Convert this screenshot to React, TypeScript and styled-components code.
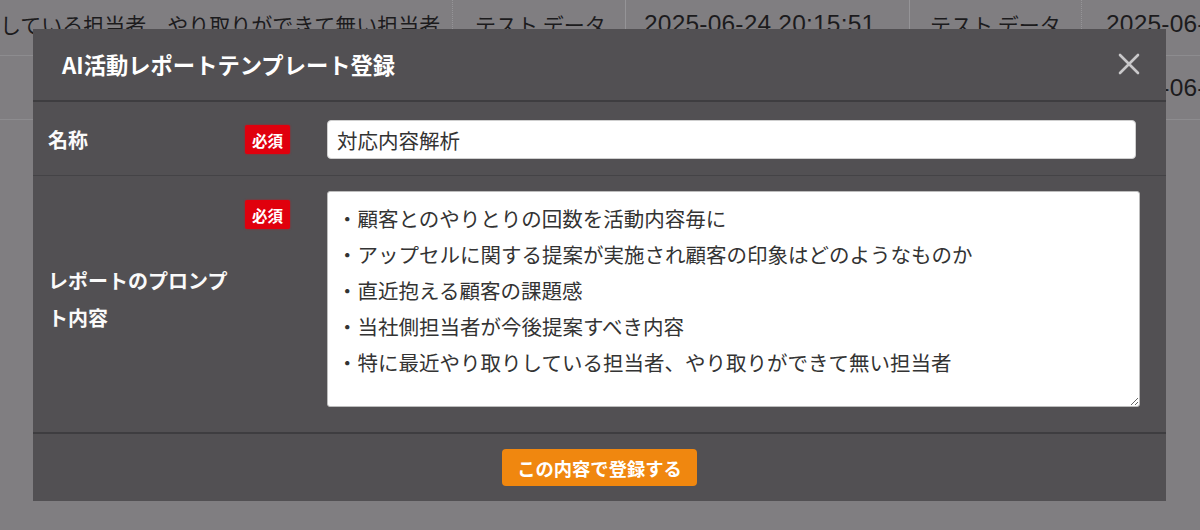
import React from "react";
import styled, { createGlobalStyle } from "styled-components";

const GlobalStyle = createGlobalStyle`
  html, body {
    margin: 0;
    padding: 0;
    background: #807e81;
    overflow: hidden;
  }
  body {
    font-family: "Noto Sans CJK JP", "Noto Sans", sans-serif;
  }
  * {
    box-sizing: border-box;
  }
`;

const Page = styled.div`
  width: 1200px;
  height: 530px;
  overflow: hidden;
`;

const Table = styled.div`
  margin-top: -8px;
  display: flex;
  flex-direction: column;
`;

const TableRow = styled.div`
  display: grid;
  grid-template-columns: 453px 173px 284px 172px 1fr;
  height: 64px;
  border-bottom: 1px solid #8d8c8f;
`;

const Cell = styled.div<{ $pad: number; $line?: "solid" | "dotted" | "none"; $mono?: boolean }>`
  display: flex;
  align-items: center;
  padding-left: ${(p) => p.$pad}px;
  border-right: ${(p) => (p.$line && p.$line !== "none" ? `1px ${p.$line} #959497` : "none")};
  font-family: ${(p) =>
    p.$mono ? `"Liberation Sans", Arial, sans-serif` : `"Noto Sans CJK JP", "Noto Sans", sans-serif`};
  font-size: ${(p) => (p.$mono ? 24.5 : 21)}px;
  letter-spacing: ${(p) => (p.$mono ? 0.2 : 0)}px;
  color: #1c1b1d;
  white-space: nowrap;
  overflow: hidden;
`;

const Backdrop = styled.div`
  position: fixed;
  inset: 0;
  display: flex;
  align-items: center;
  justify-content: center;
`;

const Modal = styled.div`
  width: 1133px;
  margin-right: 1px;
  background: #525053;
  display: flex;
  flex-direction: column;
  color: #fff;
`;

const Header = styled.div`
  height: 73px;
  display: flex;
  align-items: center;
  justify-content: space-between;
  padding: 0 26px 2px 29px;
  border-bottom: 2px solid #3e3d40;
`;

const Title = styled.h2`
  margin: 0;
  font-size: 22.3px;
  font-weight: 700;
  color: #fff;
`;

const CloseButton = styled.button`
  width: 22px;
  height: 22px;
  padding: 0;
  border: none;
  background: transparent;
  cursor: pointer;
  display: flex;
`;

const FormRow = styled.div<{ $tall?: boolean; $last?: boolean }>`
  display: grid;
  grid-template-columns: 197px 45px 1fr;
  align-items: ${(p) => (p.$tall ? "start" : "center")};
  padding: ${(p) => (p.$tall ? "15px 26px 25px 15px" : "18px 30px 16px 15px")};
  border-bottom: ${(p) => (p.$last ? "2px solid #3e3d40" : "1px solid #444346")};
`;

const Label = styled.div`
  align-self: center;
  font-size: 20px;
  font-weight: 700;
  line-height: 37px;
  padding-right: 8px;
  color: #fafafa;
`;

const Required = styled.span<{ $top?: number }>`
  display: flex;
  align-items: center;
  justify-content: center;
  height: 29px;
  margin-top: ${(p) => p.$top ?? 0}px;
  background: #e0000d;
  border-radius: 2px;
  font-size: 15.5px;
  font-weight: 700;
  color: #fff;
  box-shadow: 0 0 2px rgba(230, 0, 20, 0.7);
`;

const Field = styled.div`
  padding-left: 37px;
  display: flex;
`;

const TextInput = styled.input`
  flex: 1;
  height: 39px;
  padding: 0 9px;
  border: 1px solid #cfcfcf;
  border-radius: 4px;
  background: #fff;
  font-family: "Noto Sans CJK JP", "Noto Sans", sans-serif;
  font-size: 20.5px;
  color: #333;
  outline: none;
`;

const TextArea = styled.textarea`
  flex: 1;
  height: 216px;
  padding: 8px 9px;
  border: 1px solid #bdbdbd;
  border-radius: 3px;
  background: #fff;
  font-family: "Noto Sans CJK JP", "Noto Sans", sans-serif;
  font-size: 20.5px;
  line-height: 36px;
  color: #333;
  outline: none;
  resize: vertical;
`;

const Footer = styled.div`
  display: flex;
  justify-content: center;
  padding: 15px 0;
`;

const SubmitButton = styled.button`
  height: 37px;
  padding: 0 15px;
  border: none;
  border-radius: 4px;
  background: #f0870f;
  color: #fff;
  font-family: "Noto Sans CJK JP", "Noto Sans", sans-serif;
  font-size: 18.3px;
  font-weight: 700;
  cursor: pointer;
`;

type BgRow = { pad: number; cells: string[] };

const rows: BgRow[] = [
  {
    pad: 0,
    cells: ["している担当者、やり取りができて無い担当者", "テスト データ", "2025-06-24 20:15:51", "テスト データ", "2025-06-24 20:15:51"],
  },
  {
    pad: 60,
    cells: ["テンプレート", "テスト データ", "2025-06-24 20:10:02", "テスト データ", "2025-06-24 20:10:02"],
  },
];

const promptText = [
  "・顧客とのやりとりの回数を活動内容毎に",
  "・アップセルに関する提案が実施され顧客の印象はどのようなものか",
  "・直近抱える顧客の課題感",
  "・当社側担当者が今後提案すべき内容",
  "・特に最近やり取りしている担当者、やり取りができて無い担当者",
].join("\n");

const CloseIcon = () => (
  <svg width="22" height="22" viewBox="0 0 22 22">
    <path d="M2 2 L20 20 M20 2 L2 20" stroke="#c9c8ca" strokeWidth="2.6" strokeLinecap="round" />
  </svg>
);

export default function App() {
  return (
    <Page>
      <GlobalStyle />
      <Table>
        {rows.map((r) => (
          <TableRow key={r.cells[2]}>
            <Cell $pad={r.pad} $line="dotted">{r.cells[0]}</Cell>
            <Cell $pad={22} $line="solid">{r.cells[1]}</Cell>
            <Cell $pad={18} $line="solid" $mono>{r.cells[2]}</Cell>
            <Cell $pad={20} $line="dotted">{r.cells[3]}</Cell>
            <Cell $pad={24} $mono>{r.cells[4]}</Cell>
          </TableRow>
        ))}
      </Table>

      <Backdrop>
        <Modal>
          <Header>
            <Title>AI活動レポートテンプレート登録</Title>
            <CloseButton aria-label="閉じる">
              <CloseIcon />
            </CloseButton>
          </Header>

          <FormRow>
            <Label>名称</Label>
            <Required>必須</Required>
            <Field>
              <TextInput defaultValue="対応内容解析" />
            </Field>
          </FormRow>

          <FormRow $tall $last>
            <Label>レポートのプロンプト内容</Label>
            <Required $top={9}>必須</Required>
            <Field>
              <TextArea defaultValue={promptText} />
            </Field>
          </FormRow>

          <Footer>
            <SubmitButton>この内容で登録する</SubmitButton>
          </Footer>
        </Modal>
      </Backdrop>
    </Page>
  );
}
